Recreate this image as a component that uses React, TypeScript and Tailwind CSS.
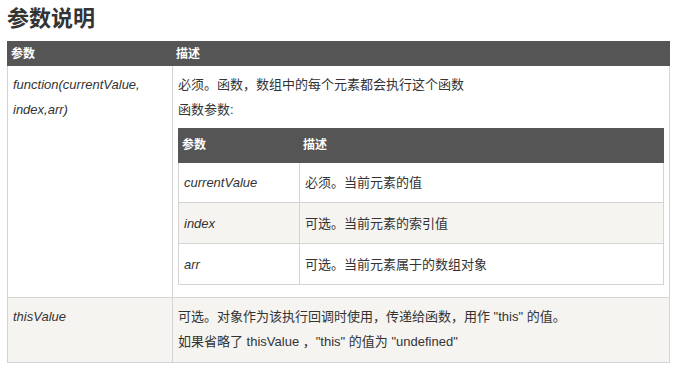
import React from "react";

const font = "font-['Liberation_Sans','Noto_Sans_CJK_SC',sans-serif]";

const innerRows = [
  { name: "currentValue", desc: "必须。当前元素的值", cls: "h-[40px]" },
  { name: "index", desc: "可选。当前元素的索引值", cls: "h-[41px] bg-[#f6f4f0]" },
  { name: "arr", desc: "可选。当前元素属于的数组对象", cls: "h-[41px]" },
];

export default function App() {
  return (
    <div className={`${font} w-[673px] h-[370px] bg-white text-[#333] overflow-hidden`}>
      <h2 className="pl-[7px] pt-[8px] mb-[11px] text-[22px] leading-[22px] font-bold text-[#333]">参数说明</h2>

      <table className="ml-[7px] w-[663px] table-fixed border-collapse text-[13px]">
        <thead>
          <tr className="h-[24px] bg-[#555] text-white text-[12px] font-bold">
            <th className="w-[165px] border border-[#555] px-[3px] text-left align-middle">参数</th>
            <th className="border border-[#555] px-[3px] text-left align-middle">描述</th>
          </tr>
        </thead>
        <tbody>
          <tr>
            <td className="border border-[#d4d4d4] px-[5px] pt-[6px] align-top italic leading-[25px]">
              function(currentValue, index,arr)
            </td>
            <td className="border border-[#d4d4d4] px-[5px] pt-[6px] pb-[12px] align-top leading-[25px]">
              <p>必须。函数，数组中的每个元素都会执行这个函数</p>
              <p className="mb-[6px]">函数参数:</p>
              <table className="w-[486px] table-fixed border-collapse">
                <thead>
                  <tr className="h-[34px] bg-[#555] text-white text-[12px] font-bold">
                    <th className="w-[121px] border border-[#555] px-[3px] text-left align-middle">参数</th>
                    <th className="border border-[#555] px-[3px] text-left align-middle">描述</th>
                  </tr>
                </thead>
                <tbody>
                  {innerRows.map((r) => (
                    <tr key={r.name} className={r.cls}>
                      <td className="border border-[#d4d4d4] px-[5px] align-middle italic">{r.name}</td>
                      <td className="border border-[#d4d4d4] px-[5px] align-middle">{r.desc}</td>
                    </tr>
                  ))}
                </tbody>
              </table>
            </td>
          </tr>
          <tr className="bg-[#f6f4f0]">
            <td className="border border-[#d4d4d4] px-[5px] pt-[6px] pb-[8px] align-top italic leading-[25px]">thisValue</td>
            <td className="border border-[#d4d4d4] px-[5px] pt-[6px] pb-[8px] align-top leading-[25px]">
              <p>可选。对象作为该执行回调时使用，传递给函数，用作 "this" 的值。</p>
              <p>如果省略了 thisValue ，"this" 的值为 "undefined"</p>
            </td>
          </tr>
        </tbody>
      </table>
    </div>
  );
}
